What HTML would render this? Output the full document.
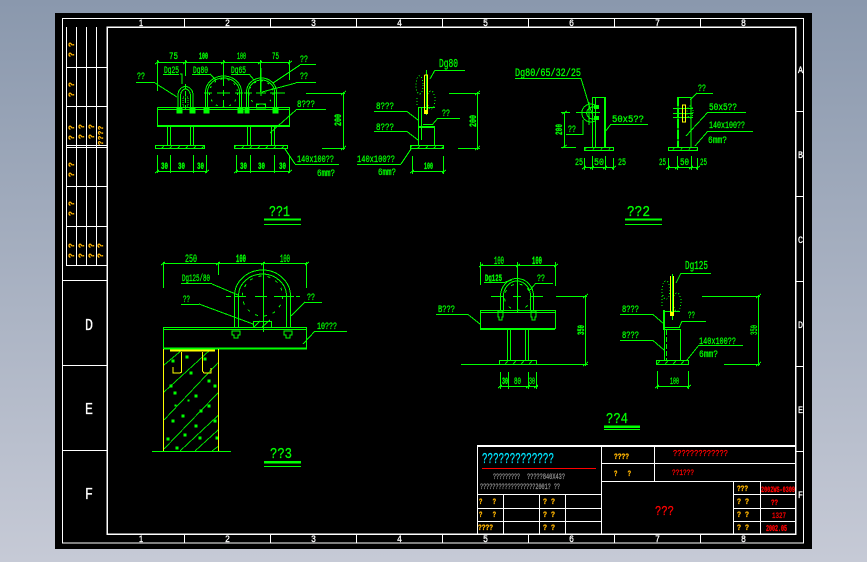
<!DOCTYPE html>
<html><head><meta charset="utf-8"><style>
html,body{margin:0;padding:0;width:867px;height:562px;overflow:hidden;background:linear-gradient(#8a98ad,#c6cad6)}
svg{position:absolute;left:0;top:0}
text{font-family:"Liberation Mono","DejaVu Sans Mono",monospace;font-size:10px;stroke-width:.3px}
.g text{fill:#00ff00;stroke:#00ff00}
.w text{fill:#fff;stroke:#fff}
.o text{fill:#ffb400;stroke:#ffb400}
.r text{fill:#ff0000;stroke:#ff0000}
</style></head><body>
<svg width="867" height="562" viewBox="0 0 867 562" xmlns="http://www.w3.org/2000/svg">
<defs>
<pattern id="h" width="8" height="5" patternUnits="userSpaceOnUse"><path d="M1 4.500L4 .5" stroke="#0f0" fill="none" shape-rendering="crispEdges"/></pattern>
<clipPath id="wall"><rect x="164" y="350" width="54" height="101"/></clipPath>
</defs>
<rect x="55" y="13" width="757" height="536" fill="#000"/>

<!-- frame -->
<g stroke="#fff" fill="none" shape-rendering="crispEdges">
<rect x="62.500" y="18.500" width="741" height="524.500"/>
<rect x="107" y="27" width="688.500" height="507" stroke-width="1.500"/>
<path d="M184.500 19V27M270.500 19V27M356.500 19V27M442.500 19V27M528.500 19V27M614.500 19V27M700.500 19V27"/>
<path d="M528.500 534V543M614.500 534V543M700.500 534V543M184.500 534V543M270.500 534V543M356.500 534V543M442.500 534V543"/>
<path d="M796 111.500H804M796 196.500H804M796 281.500H804M796 366.500H804M796 451.500H804"/>
<path d="M63 280.500H107M63 365.500H107M63 450.500H107"/>
<!-- side table -->
<path d="M66.500 27V265.500H107M76.500 27V265M86.500 27V265M96.500 27V265"/>
<path d="M66 67.500H107M66 106.500H107M66 145.500H107M66 147.500H107M66 186.500H107M66 226.500H107"/>
<!-- title block -->
<path d="M477.500 446V534M477 446.500H796M477 445.500H796"/>
<path d="M601.500 446V534M654.500 446V481M601 463.500H796M601 481.500H796"/>
<path d="M477 494.500H601M477 508.500H601M477 521.500H601M503.500 494V534M539.500 494V534M565.500 494V534"/>
<path d="M733.500 481V534M760.500 481V534M733 494.500H796M733 508.500H796M733 521.500H796"/>
</g>
<path d="M482 468.500H596" stroke="#f00" shape-rendering="crispEdges"/>

<g class="w">
<text x="139" y="26" textLength="4" lengthAdjust="spacingAndGlyphs">1</text>
<text x="225" y="26" textLength="5" lengthAdjust="spacingAndGlyphs">2</text>
<text x="311" y="26" textLength="5" lengthAdjust="spacingAndGlyphs">3</text>
<text x="397" y="26" textLength="5" lengthAdjust="spacingAndGlyphs">4</text>
<text x="483" y="26" textLength="5" lengthAdjust="spacingAndGlyphs">5</text>
<text x="569" y="26" textLength="5" lengthAdjust="spacingAndGlyphs">6</text>
<text x="655" y="26" textLength="5" lengthAdjust="spacingAndGlyphs">7</text>
<text x="741" y="26" textLength="5" lengthAdjust="spacingAndGlyphs">8</text>
<text x="139" y="542" textLength="4" lengthAdjust="spacingAndGlyphs">1</text>
<text x="225" y="542" textLength="5" lengthAdjust="spacingAndGlyphs">2</text>
<text x="311" y="542" textLength="5" lengthAdjust="spacingAndGlyphs">3</text>
<text x="397" y="542" textLength="5" lengthAdjust="spacingAndGlyphs">4</text>
<text x="483" y="542" textLength="5" lengthAdjust="spacingAndGlyphs">5</text>
<text x="569" y="542" textLength="5" lengthAdjust="spacingAndGlyphs">6</text>
<text x="655" y="542" textLength="5" lengthAdjust="spacingAndGlyphs">7</text>
<text x="741" y="542" textLength="5" lengthAdjust="spacingAndGlyphs">8</text>
<text x="798" y="73" textLength="5" lengthAdjust="spacingAndGlyphs">A</text>
<text x="798" y="158" textLength="5" lengthAdjust="spacingAndGlyphs">B</text>
<text x="798" y="243" textLength="5" lengthAdjust="spacingAndGlyphs">C</text>
<text x="798" y="328" textLength="5" lengthAdjust="spacingAndGlyphs">D</text>
<text x="798" y="413" textLength="5" lengthAdjust="spacingAndGlyphs">E</text>
<text x="798" y="498" textLength="5" lengthAdjust="spacingAndGlyphs">F</text>
<text x="85" y="330" style="font-size:17px" textLength="8" lengthAdjust="spacingAndGlyphs">D</text>
<text x="85" y="414" style="font-size:17px" textLength="8" lengthAdjust="spacingAndGlyphs">E</text>
<text x="85" y="499" style="font-size:17px" textLength="8" lengthAdjust="spacingAndGlyphs">F</text>
</g>

<!-- side table sideways text -->
<g class="o" style="font-weight:bold">
<text transform="translate(74,47) rotate(-90)" style="font-size:8px">?</text>
<text transform="translate(74,57) rotate(-90)" style="font-size:8px">?</text>
<text transform="translate(74,87) rotate(-90)" style="font-size:8px">?</text>
<text transform="translate(74,97) rotate(-90)" style="font-size:8px">?</text>
<text transform="translate(74,130) rotate(-90)" style="font-size:8px">?</text>
<text transform="translate(74,140) rotate(-90)" style="font-size:8px">?</text>
<text transform="translate(84,129) rotate(-90)" style="font-size:8px">?</text>
<text transform="translate(84,139) rotate(-90)" style="font-size:8px">?</text>
<text transform="translate(94,129) rotate(-90)" style="font-size:8px">?</text>
<text transform="translate(94,139) rotate(-90)" style="font-size:8px">?</text>
<text transform="translate(103,130) rotate(-90)" style="font-size:7px">?</text>
<text transform="translate(103,135) rotate(-90)" style="font-size:7px">?</text>
<text transform="translate(103,140) rotate(-90)" style="font-size:7px">?</text>
<text transform="translate(103,145) rotate(-90)" style="font-size:7px">?</text>
<text transform="translate(74,167) rotate(-90)" style="font-size:8px">?</text>
<text transform="translate(74,177) rotate(-90)" style="font-size:8px">?</text>
<text transform="translate(74,206) rotate(-90)" style="font-size:8px">?</text>
<text transform="translate(74,216) rotate(-90)" style="font-size:8px">?</text>
<text transform="translate(74,248) rotate(-90)" style="font-size:8px">?</text>
<text transform="translate(74,258) rotate(-90)" style="font-size:8px">?</text>
<text transform="translate(84,248) rotate(-90)" style="font-size:8px">?</text>
<text transform="translate(84,258) rotate(-90)" style="font-size:8px">?</text>
<text transform="translate(94,248) rotate(-90)" style="font-size:8px">?</text>
<text transform="translate(94,258) rotate(-90)" style="font-size:8px">?</text>
<text transform="translate(103,248) rotate(-90)" style="font-size:8px">?</text>
<text transform="translate(103,258) rotate(-90)" style="font-size:8px">?</text>
</g>

<!-- Title block text -->
<text x="482" y="463" textLength="72" lengthAdjust="spacingAndGlyphs" style="font-size:15px;fill:#00e5ff;stroke:#00e5ff">?????????????</text>
<g>
<text x="493" y="479" textLength="27" lengthAdjust="spacingAndGlyphs" fill="#8c8c8c" stroke="#8c8c8c" style="font-size:8px">?????????</text>
<text x="527" y="479" textLength="38" lengthAdjust="spacingAndGlyphs" fill="#8c8c8c" stroke="#8c8c8c" style="font-size:8px">?????840X43?</text>
<text x="480" y="489" textLength="80" lengthAdjust="spacingAndGlyphs" fill="#8c8c8c" stroke="#8c8c8c" style="font-size:8px">??????????????????2001?  ??</text>
</g>
<g class="o" style="font-weight:bold">
<text x="614" y="459" textLength="15" lengthAdjust="spacingAndGlyphs" style="font-size:8px">????</text>
<text x="614" y="476" textLength="17" xml:space="preserve" lengthAdjust="spacingAndGlyphs" style="font-size:8px">?   ?</text>
<text x="479" y="504" style="font-size:8px" textLength="17" xml:space="preserve" lengthAdjust="spacingAndGlyphs">?   ?</text>
<text x="479" y="517" style="font-size:8px" textLength="17" xml:space="preserve" lengthAdjust="spacingAndGlyphs">?   ?</text>
<text x="478" y="530" style="font-size:8px" textLength="15" lengthAdjust="spacingAndGlyphs">????</text>
<text x="543" y="504" style="font-size:8px" textLength="12" xml:space="preserve" lengthAdjust="spacingAndGlyphs">? ?</text>
<text x="543" y="517" style="font-size:8px" textLength="12" xml:space="preserve" lengthAdjust="spacingAndGlyphs">? ?</text>
<text x="543" y="530" style="font-size:8px" textLength="12" xml:space="preserve" lengthAdjust="spacingAndGlyphs">? ?</text>
<text x="737" y="491" style="font-size:8px" textLength="11" lengthAdjust="spacingAndGlyphs">???</text>
<text x="737" y="504" style="font-size:8px" textLength="12" xml:space="preserve" lengthAdjust="spacingAndGlyphs">? ?</text>
<text x="737" y="517" style="font-size:8px" textLength="12" xml:space="preserve" lengthAdjust="spacingAndGlyphs">? ?</text>
<text x="737" y="530" style="font-size:8px" textLength="12" xml:space="preserve" lengthAdjust="spacingAndGlyphs">? ?</text>
</g>
<g class="r">
<text x="673" y="456" textLength="55" lengthAdjust="spacingAndGlyphs" style="font-size:9px">?????????????</text>
<text x="672" y="475" textLength="22" lengthAdjust="spacingAndGlyphs" style="font-size:8px">??1???</text>
<text x="655" y="515" textLength="19" lengthAdjust="spacingAndGlyphs" style="font-size:14px">???</text>
<text x="761" y="492" textLength="34" lengthAdjust="spacingAndGlyphs" style="font-size:8px;font-weight:bold">2002WS-0309</text>
<text x="771" y="505" textLength="7" lengthAdjust="spacingAndGlyphs" style="font-size:8px;font-weight:bold">??</text>
<text x="772" y="518" textLength="14" lengthAdjust="spacingAndGlyphs" style="font-size:8px">1327</text>
<text x="766" y="531" textLength="21" lengthAdjust="spacingAndGlyphs" style="font-size:9px;font-weight:bold">2002.05</text>
</g>

<!-- DETAIL 1 -->
<g stroke="#0f0" fill="none" shape-rendering="crispEdges">
<path d="M157 62.500H290M157.500 60V91M185.500 60V76M223.500 60V76M260.500 60V92M289.500 60V80"/>
<path d="M155 64L159 61M183 64L187 61M221 64L225 61M258 64L262 61M288 64L292 61"/>
<path d="M163 74.500H179M192 74.500H210M231 74.500H249M180 74H182V84M210 74L216 80M249 74L254 80"/>
<path d="M300 64.500H316M300 65L273 83M296 82.500H316M296 83L262 92M136 82.500H155M155 83L177 97"/>
<!-- small U -->
<path d="M178 110V95A7.500 8.500 0 0 1 193 95V110M180.500 110V96A5 7 0 0 1 190.500 96V110"/>
<path d="M185.500 84V110" stroke-dasharray="5 2"/>
<rect x="183" y="97" width="5" height="9" stroke="#0f0" stroke-dasharray="1 1"/>
<!-- mid U -->
<path d="M205.500 110V92A18 16 0 0 1 241.500 92V110M207.500 110V92A16 14 0 0 1 239.500 92V110"/>
<path d="M223.500 72V86M223.500 90V96M223.500 100V107M204 93H212M217 93H230M235 93H243" />
<circle cx="223.500" cy="93" r="14" stroke-dasharray="2 5"/>
<!-- right U -->
<path d="M246.500 110V92A15 14 0 0 1 276.500 92V110M248.500 110V92A13 12 0 0 1 274.500 92V110"/>
<path d="M261 68V96M244 93H252M256 93H266M270 93H285"/>
<circle cx="261" cy="93" r="12" stroke-dasharray="2 5"/>
<rect x="256.500" y="104" width="9" height="4" stroke-width="1"/>
<!-- beam -->
<path d="M157.500 107.500H289.500V126M157.500 107.500V126M157 109.500H290"/>
<path d="M157 126H290" stroke-width="2"/>
<path d="M167.500 126V145M170.500 126V145M190.500 126V145M193.500 126V145M247.500 126V145M250.500 126V145M271.500 126V145M274.500 126V145"/>
<rect x="155.500" y="145.500" width="49" height="3" fill="url(#h)"/>
<rect x="234.500" y="145.500" width="53" height="3" fill="url(#h)"/>
<!-- nuts -->
<path d="M177 108h5v5h-5zM190 108h5v5h-5zM204 108h5v5h-5zM238 108h5v5h-5zM245 108h4v5h-4zM273 108h5v5h-5z" fill="#0f0"/>
<!-- bottom dims -->
<path d="M157 171.500H207M236 171.500H290M157.500 155V173M170.500 155V173M193.500 155V173M206.500 155V173M236.500 155V173M250.500 155V173M274.500 155V173M289.500 155V173"/>
<path d="M155 173L159 170M205 173L209 170M234 173L238 170M288 173L292 170"/>
<!-- right dim -->
<path d="M306 93.500H345M322 148.500H345M343.500 92V150M341 95L346 91M341 150L346 146"/>
<path d="M296 109.500H326M296 110L270 133M295 164.500H339M295 164L285 149"/>
</g>
<g class="g">
<text x="169" y="59" textLength="9" lengthAdjust="spacingAndGlyphs">75</text>
<text x="199" y="59" textLength="9" lengthAdjust="spacingAndGlyphs" style="font-weight:bold">100</text>
<text x="237" y="59" textLength="9" lengthAdjust="spacingAndGlyphs">100</text>
<text x="272" y="59" textLength="7" lengthAdjust="spacingAndGlyphs">75</text>
<text x="164" y="73" textLength="15" lengthAdjust="spacingAndGlyphs">Dg25</text>
<text x="193" y="73" textLength="15" lengthAdjust="spacingAndGlyphs">Dg80</text>
<text x="231" y="73" textLength="15" lengthAdjust="spacingAndGlyphs">Dg65</text>
<text x="300" y="62" textLength="8" lengthAdjust="spacingAndGlyphs">??</text>
<text x="300" y="79" textLength="8" lengthAdjust="spacingAndGlyphs">??</text>
<text x="137" y="79" textLength="8" lengthAdjust="spacingAndGlyphs">??</text>
<text x="297" y="107" textLength="18" lengthAdjust="spacingAndGlyphs">8???</text>
<text x="297" y="162" textLength="37" lengthAdjust="spacingAndGlyphs">140x100??</text>
<text x="317" y="176" textLength="18" lengthAdjust="spacingAndGlyphs">6mm?</text>
<text x="161" y="169" textLength="7" lengthAdjust="spacingAndGlyphs" style="font-weight:bold">30</text>
<text x="178" y="169" textLength="7" lengthAdjust="spacingAndGlyphs" style="font-weight:bold">30</text>
<text x="197" y="169" textLength="7" lengthAdjust="spacingAndGlyphs" style="font-weight:bold">30</text>
<text x="240" y="169" textLength="7" lengthAdjust="spacingAndGlyphs" style="font-weight:bold">30</text>
<text x="258" y="169" textLength="7" lengthAdjust="spacingAndGlyphs" style="font-weight:bold">30</text>
<text x="279" y="169" textLength="7" lengthAdjust="spacingAndGlyphs" style="font-weight:bold">30</text>
<text transform="translate(341,126) rotate(-90)" textLength="12" lengthAdjust="spacingAndGlyphs" style="font-weight:bold">200</text>
<text x="269" y="216" textLength="21" lengthAdjust="spacingAndGlyphs" style="font-size:15px">??1</text>
</g>
<path d="M264 219.500H301" stroke="#0f0" stroke-width="2" shape-rendering="crispEdges"/>
<path d="M264 224.500H301" stroke="#0f0" shape-rendering="crispEdges"/>

<!-- DETAIL 2 -->
<g stroke="#0f0" fill="none" shape-rendering="crispEdges">
<path d="M435 70.500H465M435 70L430 79M426.500 70V115"/>
<ellipse cx="419.500" cy="85" rx="3.500" ry="9" stroke-dasharray="1 2"/>
<ellipse cx="431" cy="100" rx="4" ry="9" stroke-dasharray="1 2"/>
<path d="M417 98V106" stroke-dasharray="1 2"/>
<path d="M418.500 107V146M418.500 107.500H435M434.500 127V146M418 127.500H435M423 124.500H433M421.500 107V140" />
<path d="M418 127H435" stroke-width="2"/>
<path d="M374 111.500H407L418 120M374 131.500H407L418 140M438 118.500H460M438 118L432 125M357 164.500H401M401 164L411 149"/>
<rect x="410.500" y="145.500" width="33" height="3" fill="url(#h)"/>
<path d="M412 171.500H443M412.500 156V174M443.500 156V174M410 173L414 170M442 173L446 170"/>
<path d="M449 93.500H480M458 148.500H480M477.500 92V150M475 95L480 91M475 150L480 146"/>
</g>
<path d="M424.500 75H427.500V110M424.500 75V110" stroke="#ff0" fill="none" shape-rendering="crispEdges"/>
<rect x="424" y="110" width="4" height="4" fill="#ff0"/>
<g class="g">
<text x="439" y="67" textLength="19" lengthAdjust="spacingAndGlyphs" style="font-size:12px">Dg80</text>
<text x="376" y="109" textLength="18" lengthAdjust="spacingAndGlyphs">8???</text>
<text x="376" y="130" textLength="18" lengthAdjust="spacingAndGlyphs">8???</text>
<text x="442" y="116" textLength="8" lengthAdjust="spacingAndGlyphs">??</text>
<text x="357" y="162" textLength="38" lengthAdjust="spacingAndGlyphs">140x100??</text>
<text x="378" y="175" textLength="18" lengthAdjust="spacingAndGlyphs">6mm?</text>
<text x="424" y="169" textLength="9" lengthAdjust="spacingAndGlyphs" style="font-weight:bold">100</text>
<text transform="translate(476,127) rotate(-90)" textLength="12" lengthAdjust="spacingAndGlyphs" style="font-weight:bold">200</text>
</g>

<!-- DETAIL 3 -->
<g stroke="#0f0" fill="none" shape-rendering="crispEdges">
<path d="M515 78.500H581L590 108L593 116"/>
<path d="M592.500 97.500H605.500V147M592.500 97V147M595.500 97V147"/>
<path d="M605 97V147" stroke-width="2"/>
<rect x="584.500" y="147.500" width="29" height="3" fill="url(#h)"/>
<path d="M595 105A9 9 0 1 0 595 121M596 108A6 6 0 1 0 596 118M576 112.500H600M589 102V125"/>
<path d="M561 112.500H570M561 147.500H576M564.500 112V147M562 114L567 111M562 148L567 145"/>
<path d="M566 134.500H583V120M611 124.500H648M611 124L605 132"/>
<path d="M584 167.500H614M584.500 158V170M592.500 156V170M605.500 156V170M613.500 158V170"/>
<path d="M582 169L586 166M590 169L594 166M603 169L607 166M612 169L616 166"/>
</g>
<path d="M594 105h5v4h-5zM594 116h5v4h-5z" fill="#0f0"/>
<g class="g">
<text x="515" y="76" textLength="66" lengthAdjust="spacingAndGlyphs" style="font-size:11px">Dg80/65/32/25</text>
<text transform="translate(562,135) rotate(-90)" textLength="11" lengthAdjust="spacingAndGlyphs" style="font-weight:bold">200</text>
<text x="568" y="132" textLength="8" lengthAdjust="spacingAndGlyphs">??</text>
<text x="612" y="122" textLength="32" lengthAdjust="spacingAndGlyphs">50x5??</text>
<text x="575" y="165" textLength="8" lengthAdjust="spacingAndGlyphs">25</text>
<text x="594" y="165" textLength="10" lengthAdjust="spacingAndGlyphs">50</text>
<text x="618" y="165" textLength="8" lengthAdjust="spacingAndGlyphs">25</text>
<text x="627" y="216" textLength="23" lengthAdjust="spacingAndGlyphs" style="font-size:15px">??2</text>
</g>
<path d="M625 219.500H662" stroke="#0f0" stroke-width="2" shape-rendering="crispEdges"/>
<path d="M625 224.500H662" stroke="#0f0" shape-rendering="crispEdges"/>

<!-- DETAIL 3b -->
<g stroke="#0f0" fill="none" shape-rendering="crispEdges">
<path d="M678 97.500H691V147M678 97V147" />
<path d="M678 97V147" stroke-width="2" stroke-dasharray="9 2"/>
<path d="M673 108.500H693M673 113.500H693M673 117.500H693"/>
<ellipse cx="690" cy="112" rx="3" ry="6" stroke-dasharray="1 2"/>
<rect x="668.500" y="147.500" width="29" height="3" fill="url(#h)"/>
<path d="M697 93.500H713M697 93L690 100M708 112.500H746M708 112L686 136M708 131.500H753M708 131L695 146"/>
<path d="M668 167.500H698M668.500 158V170M677.500 156V170M691.500 156V170M697.500 158V170M666 169L670 166M675 169L679 166M689 169L693 166M696 169L700 166"/>
</g>
<path d="M682.500 105H685.500V122H682.500Z" stroke="#ff0" fill="none" shape-rendering="crispEdges"/>
<g class="g">
<text x="698" y="91" textLength="8" lengthAdjust="spacingAndGlyphs">??</text>
<text x="709" y="110" textLength="28" lengthAdjust="spacingAndGlyphs">50x5??</text>
<text x="709" y="128" textLength="36" lengthAdjust="spacingAndGlyphs">140x100??</text>
<text x="708" y="143" textLength="19" lengthAdjust="spacingAndGlyphs">6mm?</text>
<text x="659" y="165" textLength="7" lengthAdjust="spacingAndGlyphs">25</text>
<text x="680" y="165" textLength="9" lengthAdjust="spacingAndGlyphs">50</text>
<text x="700" y="165" textLength="7" lengthAdjust="spacingAndGlyphs">25</text>
</g>

<!-- DETAIL BOTTOM LEFT -->
<g stroke="#0f0" fill="none" shape-rendering="crispEdges">
<path d="M163 263.500H308M163.500 262V288M218.500 262V275M263.500 262V332M306.500 262V288"/>
<path d="M161 265L165 262M216 265L220 262M261 265L265 262M305 265L309 262"/>
<path d="M234.500 327V296A28 26 0 0 1 290.500 296V327M238.500 327V296A24 22 0 0 1 286.500 296V327"/>
<circle cx="262.500" cy="296" r="20" stroke-dasharray="3 6"/>
<path d="M226 296.500H231M235 296.500H246M255 296.500H267M274 296.500H294M296 296.500H300"/>
<path d="M181 283.500H212M212 284L238 295M181 304.500H199M199 304L253 324M305 302.500H322M305 302L291 316M315 331.500H347M315 331L303 344"/>
<path d="M163.500 327.500H306.500V349M163.500 327V349M163 329.500H307"/>
<path d="M163 348.500H307" stroke-width="2"/>
<rect x="253.500" y="321.500" width="18" height="6"/>
<path d="M262 327L270 320M254 327L260 321"/>
<path d="M232 331h8v4h-2v3h-4v-3h-2zM284 331h8v4h-2v3h-4v-3h-2z"/>
<!-- hatch -->
<g clip-path="url(#wall)">
<path d="M164 365L182 350M164 392L210 350M164 420L230 350M164 449L240 370M180 451L240 395M195 451L240 410M212 451L240 430" stroke="#0d0"/>
<path d="M172 360h2v2h-2zM186 356h2v2h-2zM204 358h2v2h-2zM170 385h2v2h-2zM190 372h2v2h-2zM208 380h2v2h-2zM172 420h2v2h-2zM174 392h2v2h-2zM195 395h2v2h-2zM214 385h2v2h-2zM200 410h2v2h-2zM182 415h2v2h-2zM167 438h2v2h-2zM184 434h2v2h-2zM199 437h2v2h-2zM214 420h2v2h-2zM208 405h2v2h-2zM195 425h2v2h-2zM176 447h2v2h-2zM216 437h2v2h-2zM175 405h1v1h-1zM188 400h1v1h-1z" fill="#0f0"/>
</g>
<path d="M152 451.500H231"/>
</g>
<path d="M163.500 349V451M218.500 349V451" stroke="#ff0" fill="none" shape-rendering="crispEdges"/>
<path d="M170 350.500H215" stroke="#ff0" stroke-width="2" shape-rendering="crispEdges"/>
<path d="M181.500 352V372L180 373H173V367M202.500 352V371L204 373H211V368" stroke="#ff0" fill="none" shape-rendering="crispEdges"/>
<g class="g">
<text x="185" y="262" textLength="12" lengthAdjust="spacingAndGlyphs" style="font-size:11px">250</text>
<text x="236" y="262" textLength="10" lengthAdjust="spacingAndGlyphs" style="font-size:11px;font-weight:bold">100</text>
<text x="280" y="262" textLength="10" lengthAdjust="spacingAndGlyphs" style="font-size:11px">100</text>
<text x="182" y="281" textLength="28" lengthAdjust="spacingAndGlyphs">Dg125/80</text>
<text x="183" y="302" textLength="7" lengthAdjust="spacingAndGlyphs">??</text>
<text x="307" y="300" textLength="8" lengthAdjust="spacingAndGlyphs">??</text>
<text x="317" y="329" textLength="20" lengthAdjust="spacingAndGlyphs">10???</text>
<text x="270" y="458" textLength="22" lengthAdjust="spacingAndGlyphs" style="font-size:15px">??3</text>
</g>
<path d="M264 462H301" stroke="#0f0" stroke-width="2.500" shape-rendering="crispEdges"/>
<path d="M264 466.500H301" stroke="#0f0" shape-rendering="crispEdges"/>

<!-- DETAIL BOTTOM MID -->
<g stroke="#0f0" fill="none" shape-rendering="crispEdges">
<path d="M480 265.500H556M480.500 262V285M517.500 262V312M555.500 262V286M479 267L483 264M516 267L520 264M554 267L558 264"/>
<path d="M484 282.500H505M505 282L512 280M536 283.500H553M536 283L530 290"/>
<path d="M500.500 311V296A16.500 17.500 0 0 1 533.500 296V311M503.500 311V296A13.500 15 0 0 1 530.500 296V311"/>
<path d="M491 296.500H504M513 296.500H521M530 296.500H543"/>
<circle cx="517.500" cy="297" r="13" stroke-dasharray="3 6"/>
<path d="M480.500 310.500H555.500V329M480.500 310V329M480 312.500H556"/>
<path d="M480 329H555" stroke-width="2"/>
<path d="M507.500 329V360M510.500 329V360M525.500 329V360M528.500 329V360"/>
<rect x="499.500" y="360.500" width="37" height="4" fill="url(#h)"/>
<path d="M461 364.500H588"/>
<path d="M436 314.500H468L480 324"/>
<path d="M556 296.500H587M585.500 295V366M583 298L588 294M583 366L588 362"/>
<path d="M499 386.500H538M500.500 372V389M508.500 372V389M528.500 372V389M536.500 372V389M498 388L502 385M526 388L530 385M534 388L538 385"/>
<path d="M498 311h5v6h-1v3h-3v-3h-1zM531 311h5v6h-1v3h-3v-3h-1z"/>
</g>
<g class="g">
<text x="494" y="264" textLength="10" lengthAdjust="spacingAndGlyphs" style="font-size:11px">100</text>
<text x="532" y="264" textLength="10" lengthAdjust="spacingAndGlyphs" style="font-size:11px;font-weight:bold">100</text>
<text x="485" y="281" textLength="17" lengthAdjust="spacingAndGlyphs" style="font-weight:bold">Dg125</text>
<text x="537" y="281" textLength="8" lengthAdjust="spacingAndGlyphs">??</text>
<text x="438" y="312" textLength="17" lengthAdjust="spacingAndGlyphs">B???</text>
<text x="502" y="384" textLength="6" lengthAdjust="spacingAndGlyphs" style="font-weight:bold">30</text>
<text x="514" y="384" textLength="7" lengthAdjust="spacingAndGlyphs">80</text>
<text x="529" y="384" textLength="6" lengthAdjust="spacingAndGlyphs">30</text>
<text transform="translate(584,335) rotate(-90)" textLength="10" lengthAdjust="spacingAndGlyphs" style="font-weight:bold">350</text>
<text x="606" y="423" textLength="22" lengthAdjust="spacingAndGlyphs" style="font-size:15px">??4</text>
</g>
<path d="M604 426.500H640" stroke="#0f0" stroke-width="2.500" shape-rendering="crispEdges"/>
<path d="M604 429.500H640" stroke="#0f0" shape-rendering="crispEdges"/>

<!-- DETAIL BOTTOM RIGHT -->
<g stroke="#0f0" fill="none" shape-rendering="crispEdges">
<path d="M681 273.500H711M681 273L676 283M672.500 274V320"/>
<ellipse cx="666" cy="290" rx="4" ry="9" stroke-dasharray="1 2"/>
<ellipse cx="677" cy="302" rx="4" ry="9" stroke-dasharray="1 2"/>
<path d="M662 296V306" stroke-dasharray="1 2"/>
<path d="M664.500 310V360M664 311.500H680M664 327.500H680M664 329.500H681M680.500 329V360" />
<path d="M664 310V330" stroke-width="2"/>
<path d="M666.500 330V360" stroke-dasharray="5 2"/>
<rect x="656.500" y="360.500" width="32" height="4" fill="url(#h)"/>
<path d="M620 314.500H653L664 324M620 340.500H653L664 350M682 321.500H706M682 321L679 328M699 345.500H743M699 345L687 360"/>
<path d="M702 296.500H760M724 364.500H760M758.500 295V366M756 298L761 294M756 366L761 362"/>
<path d="M657 386.500H690M657.500 371V389M688.500 371V389M655 388L659 385M687 388L691 385"/>
</g>
<path d="M670.500 276V312M673.500 276V312" stroke="#ff0" fill="none" shape-rendering="crispEdges"/>
<rect x="670" y="312" width="4" height="4" fill="#ff0"/>
<g class="g">
<text x="685" y="269" textLength="23" lengthAdjust="spacingAndGlyphs" style="font-size:12px">Dg125</text>
<text x="622" y="312" textLength="17" lengthAdjust="spacingAndGlyphs">8???</text>
<text x="622" y="338" textLength="17" lengthAdjust="spacingAndGlyphs">8???</text>
<text x="688" y="318" textLength="7" lengthAdjust="spacingAndGlyphs">??</text>
<text x="699" y="344" textLength="37" lengthAdjust="spacingAndGlyphs">140x100??</text>
<text x="699" y="357" textLength="19" lengthAdjust="spacingAndGlyphs">6mm?</text>
<text x="670" y="384" textLength="9" lengthAdjust="spacingAndGlyphs">100</text>
<text transform="translate(757,335) rotate(-90)" textLength="10" lengthAdjust="spacingAndGlyphs">350</text>
</g>
</svg>
</body></html>
